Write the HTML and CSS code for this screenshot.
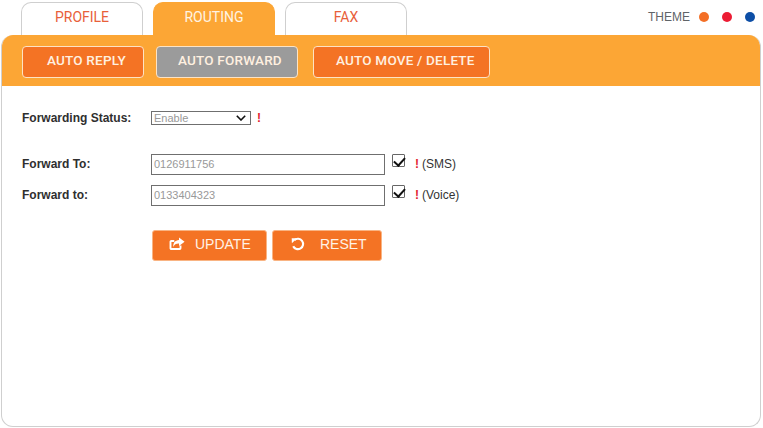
FILE: index.html
```html
<!DOCTYPE html>
<html lang="en">
<head>
<meta charset="utf-8">
<title>Routing</title>
<link rel="stylesheet" href="styles.css">
</head>
<body>
<div class="page">
  <header class="top">
    <nav class="tabs">
      <a class="tab">PROFILE</a>
      <a class="tab tab-active">ROUTING</a>
      <a class="tab">FAX</a>
    </nav>
    <div class="theme">
      <span class="theme-label">THEME</span>
      <span class="dot dot-orange"></span>
      <span class="dot dot-red"></span>
      <span class="dot dot-blue"></span>
    </div>
  </header>
  <main class="panel">
    <div class="subnav">
      <a class="sub sub-reply">AUTO REPLY</a>
      <a class="sub sub-forward">AUTO FORWARD</a>
      <a class="sub sub-move">AUTO MOVE / DELETE</a>
    </div>
    <form class="form">
      <div class="row row-status">
        <label class="label">Forwarding Status:</label>
        <span class="select-wrap">
          <select class="select"><option>Enable</option><option>Disable</option></select>
          <svg class="chevron" viewBox="0 0 10 6" width="10" height="6" aria-hidden="true">
            <path d="M.8.8 5 5 9.2.8" fill="none" stroke="#111" stroke-width="1.6"/>
          </svg>
        </span>
        <span class="req req-status">!</span>
      </div>
      <div class="row row-first">
        <label class="label">Forward To:</label>
        <input class="input" type="text" value="0126911756">
        <input class="check" type="checkbox" checked>
        <span class="req">!</span><span class="note">(SMS)</span>
      </div>
      <div class="row row-second">
        <label class="label">Forward to:</label>
        <input class="input" type="text" value="0133404323">
        <input class="check" type="checkbox" checked>
        <span class="req">!</span><span class="note">(Voice)</span>
      </div>
      <div class="actions">
        <button class="btn btn-update" type="button">
          <svg class="icon" viewBox="0 0 16 14" width="16" height="14" aria-hidden="true">
            <path d="M11.5 8.5v2.7a.8.8 0 0 1-.8.8H2.3a.8.8 0 0 1-.8-.8V4.8a.8.8 0 0 1 .8-.8h3" fill="none" stroke="#fff" stroke-width="1.9"/>
            <path d="M10 .6 15.6 4.8 10 9V6.5C7.2 6.4 5.2 7.4 4.3 10 4 6 6 3.4 10 3.1Z" fill="#fff"/>
          </svg>
          <span>UPDATE</span>
        </button>
        <button class="btn btn-reset" type="button">
          <svg class="icon" viewBox="0 0 14 14" width="14" height="14" aria-hidden="true">
            <path d="M3.4 3.1A5.2 5.2 0 1 1 2.2 9.2" fill="none" stroke="#fff" stroke-width="2.1"/>
            <path d="M.7 1.2 6 1.3.9 6.3Z" fill="#fff"/>
          </svg>
          <span>RESET</span>
        </button>
      </div>
    </form>
  </main>
</div>
</body>
</html>
```
FILE: styles.css
```css
* { box-sizing: border-box; }
html, body { margin: 0; padding: 0; background: #fff; }
body { width: 763px; height: 428px; overflow: hidden; font-family: "Liberation Sans", Arial, sans-serif; }
.page { padding: 2px 2px 1px 1px; height: 428px; display: flex; flex-direction: column; }

.top { display: flex; justify-content: space-between; height: 33px; padding-left: 20px; flex: none; }
.tabs { display: flex; align-items: flex-end; gap: 10px; }
.tab {
  width: 122px; height: 33px; border: 1px solid #cfcfcf; border-bottom: 0;
  border-radius: 10px 10px 0 0; text-align: center; font: 400 14px/29px Roboto, sans-serif;
  color: #e8603a; background: #fff;
}
.tab-active { background: #fca635; border-color: #fca635; color: #fff4e2; }
.theme { display: flex; align-items: center; height: 30px; padding-right: 6px; }
.theme-label { font-size: 12px; color: #5f6468; margin-right: 9px; }
.dot { width: 10px; height: 10px; border-radius: 50%; }
.dot + .dot { margin-left: 13px; }
.dot-orange { background: #f36f26; }
.dot-red { background: #ec1c34; }
.dot-blue { background: #0d4ea6; }

.panel { flex: 1; border: 1px solid #cfcfcf; border-top: 0; border-radius: 12px; background: #fff; overflow: hidden; }
.subnav { height: 51px; background: #fca635; display: flex; align-items: flex-start; padding: 11px 0 0 21px; margin: 0 -1px; }
.sub {
  height: 32px; border: 1px solid #fde3c4; border-radius: 4px; color: #fff0e0;
  font: 500 13.5px/27px Roboto, sans-serif; letter-spacing: 0.2px; padding-left: 24px;
}
.sub-reply { width: 122px; background: #f47324; margin-right: 12px; }
.sub-forward { width: 142px; background: #9b9b9b; padding-left: 21px; margin-right: 15px; }
.sub-move { width: 177px; background: #f47324; padding-left: 22px; }

.form { padding: 0 0 0 20px; }
.row { display: flex; align-items: center; font-size: 12px; color: #333; }
.row-status { height: 20px; margin-top: 22px; }
.row-first { height: 22px; margin-top: 25px; }
.row-second { height: 22px; margin-top: 9px; }
.label { width: 129px; font-weight: 700; color: #2f2f2f; flex: none; }
.select-wrap { position: relative; display: flex; width: 100px; height: 14px; }
.select {
  appearance: none; width: 100%; height: 100%; padding: 0 0 0 2px; font: 11px "Liberation Sans", Arial, sans-serif; color: #999;
  border: 1px solid #6f6f6f; border-radius: 0; background: #fff;
}
.chevron { position: absolute; top: 4px; right: 5px; }
.req { color: #e2232e; font-size: 12px; font-weight: 700; }
.req-status { margin-left: 6px; }
.input {
  width: 234px; height: 21px; padding: 0 0 0 2px; border: 1px solid #6f6f6f; border-radius: 0;
  font: 11px "Liberation Sans", Arial, sans-serif; color: #999; background: #fff; outline: 0;
}
.check {
  appearance: none; position: relative; width: 13px; height: 13px; margin: 0 10px 7px 7px; flex: none;
  border: 1px solid #666; border-radius: 1px; background: #fff;
}
.check:checked::after {
  content: ""; position: absolute; left: 3px; top: 0; width: 5px; height: 9px;
  border: solid #111; border-width: 0 2px 2px 0; transform: rotate(42deg);
}
.note { margin-left: 3px; color: #333; }

.actions { display: flex; gap: 5px; margin: 24px 0 0 130px; }
.btn {
  height: 31px; border: 1px solid #f9b483; border-radius: 3px; background: #f47324; color: #fff2e6;
  font: 400 14px "Liberation Sans", Arial, sans-serif; display: flex; align-items: center; padding: 0 0 3px;
}
.btn-update { width: 115px; padding-left: 16px; gap: 10px; }
.btn-reset { width: 110px; padding-left: 18px; gap: 15px; }
.icon { flex: none; }
```
